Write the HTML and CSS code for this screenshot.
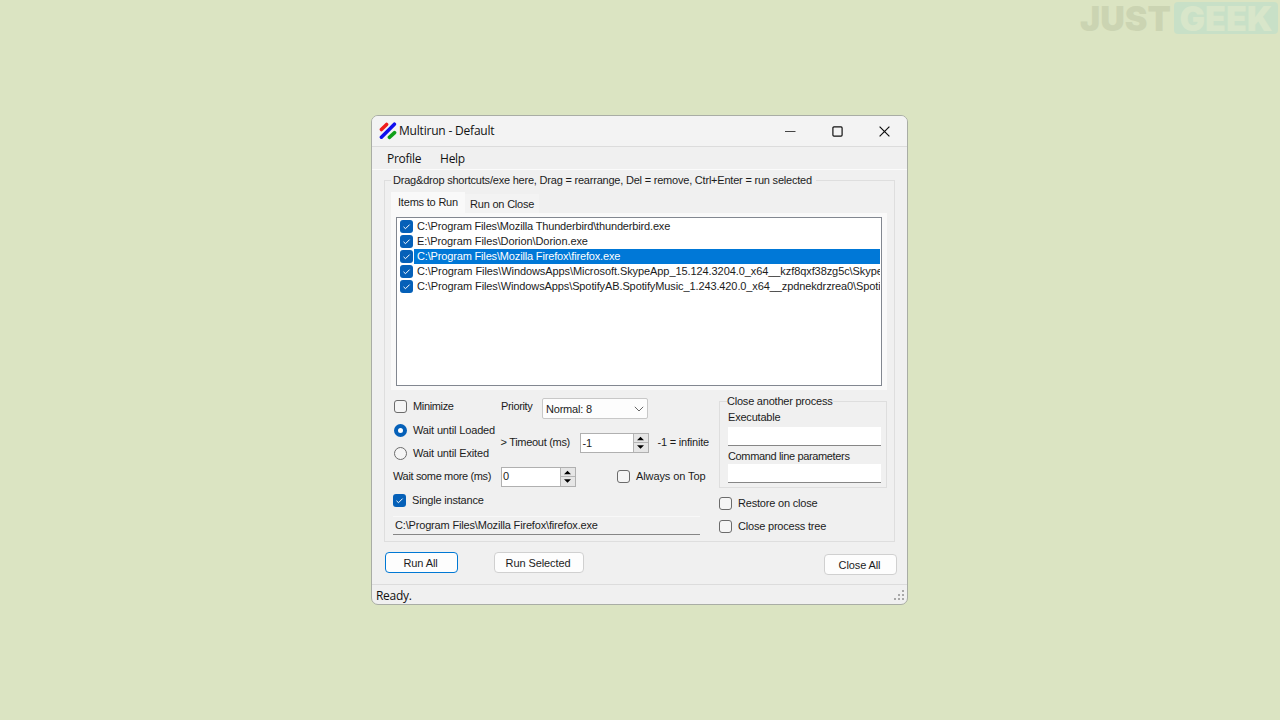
FILE: index.html
```html
<!DOCTYPE html>
<html lang="en">
<head>
    <meta charset="UTF-8">
    <meta name="viewport" content="width=device-width, initial-scale=1.0">
    <title>Multirun - Default</title>
    <link rel="stylesheet" href="styles.css">
</head>
<body>
    <div class="brand"><span class="brand-just">JUST</span><span class="brand-geek">GEEK</span></div>

    <div class="window">
        <div class="titlebar">
            <svg class="app-icon" width="18" height="18" viewBox="0 0 18 18" fill="none" stroke-linecap="round" stroke-width="3.5">
                <path d="M2.4 7.6L7.6 2.4" stroke="#f01c1c"/>
                <path d="M2.4 15.2L15.4 2.2" stroke="#1010ee"/>
                <path d="M10.4 15.4L15.6 10.6" stroke="#10a018"/>
            </svg>
            <span class="title">Multirun - Default</span>
            <div class="controls">
                <svg width="11" height="11" viewBox="0 0 11 11" fill="none" stroke="#444"><path d="M0 5.5H10.5"/></svg>
                <svg width="11" height="11" viewBox="0 0 11 11" fill="none" stroke="#111" stroke-width="1.2"><rect x="0.9" y="0.9" width="9.2" height="9.2" rx="1"/></svg>
                <svg width="11" height="11" viewBox="0 0 11 11" fill="none" stroke="#111" stroke-width="1.2"><path d="M0.6 0.6L10.4 10.4M10.4 0.6L0.6 10.4"/></svg>
            </div>
        </div>

        <div class="menubar">
            <span>Profile</span>
            <span>Help</span>
        </div>

        <fieldset class="group main-group">
            <legend>Drag&amp;drop shortcuts/exe here, Drag = rearrange, Del = remove, Ctrl+Enter = run selected</legend>

            <div class="tabs">
                <div class="tab active">Items to Run</div>
                <div class="tab">Run on Close</div>
            </div>
            <div class="tab-page">
                <div class="list">
                    <div class="item"><span class="check on"><svg viewBox="0 0 13 13"><path d="M3.5 6.8L5.5 8.7L9.6 4.6"/></svg></span><span class="path">C:\Program Files\Mozilla Thunderbird\thunderbird.exe</span></div>
                    <div class="item"><span class="check on"><svg viewBox="0 0 13 13"><path d="M3.5 6.8L5.5 8.7L9.6 4.6"/></svg></span><span class="path long">E:\Program Files\Dorion\Dorion.exe</span></div>
                    <div class="item selected"><span class="check on"><svg viewBox="0 0 13 13"><path d="M3.5 6.8L5.5 8.7L9.6 4.6"/></svg></span><span class="path">C:\Program Files\Mozilla Firefox\firefox.exe</span></div>
                    <div class="item"><span class="check on"><svg viewBox="0 0 13 13"><path d="M3.5 6.8L5.5 8.7L9.6 4.6"/></svg></span><span class="path long">C:\Program Files\WindowsApps\Microsoft.SkypeApp_15.124.3204.0_x64__kzf8qxf38zg5c\Skype</span></div>
                    <div class="item"><span class="check on"><svg viewBox="0 0 13 13"><path d="M3.5 6.8L5.5 8.7L9.6 4.6"/></svg></span><span class="path longer">C:\Program Files\WindowsApps\SpotifyAB.SpotifyMusic_1.243.420.0_x64__zpdnekdrzrea0\Spotif</span></div>
                </div>
            </div>

            <div class="options">
                <div class="left">
                    <div class="row row-priority">
                        <div class="cell"><span class="check"></span><span class="tight">Minimize</span></div>
                        <span class="priority-label tight">Priority</span>
                        <div class="select"><span>Normal: 8</span><svg width="10" height="6" viewBox="0 0 10 6" fill="none" stroke="#666"><path d="M0.8 0.8L5 5L9.2 0.8"/></svg></div>
                    </div>
                    <div class="row row-wait">
                        <div class="radios">
                            <div class="radio-row"><span class="radio on"></span><span>Wait until Loaded</span></div>
                            <div class="radio-row"><span class="radio"></span><span>Wait until Exited</span></div>
                        </div>
                        <span class="timeout-label">&gt; Timeout (ms)</span>
                        <div class="spinner spinner-timeout"><span>-1</span><svg width="15" height="18" viewBox="0 0 15 18"><path d="M0 0H15V18H0Z" fill="#e6e6e6"/><path d="M0.5 0V18M0 8.5H15" stroke="#b5b5b5"/><path d="M7.5 2.8L11 6.3H4Z M7.5 14.8L11 11.3H4Z" fill="#000"/></svg></div>
                        <span class="infinite">-1 = infinite</span>
                    </div>
                    <div class="row row-more">
                        <span class="more-label tight">Wait some more (ms)</span>
                        <div class="spinner spinner-more"><span>0</span><svg width="15" height="18" viewBox="0 0 15 18"><path d="M0 0H15V18H0Z" fill="#e6e6e6"/><path d="M0.5 0V18M0 8.5H15" stroke="#b5b5b5"/><path d="M7.5 2.8L11 6.3H4Z M7.5 14.8L11 11.3H4Z" fill="#000"/></svg></div>
                        <span class="check"></span><span class="on-top">Always on Top</span>
                    </div>
                    <div class="row row-single">
                        <span class="check on"><svg viewBox="0 0 13 13"><path d="M3.5 6.8L5.5 8.7L9.6 4.6"/></svg></span><span>Single instance</span>
                    </div>
                    <div class="path-field">C:\Program Files\Mozilla Firefox\firefox.exe</div>
                </div>

                <div class="right">
                    <fieldset class="group close-group">
                        <legend>Close another process</legend>
                        <div class="field-label">Executable</div>
                        <div class="field"></div>
                        <div class="field-label tight">Command line parameters</div>
                        <div class="field"></div>
                    </fieldset>
                    <div class="row right-row"><span class="check"></span><span>Restore on close</span></div>
                    <div class="row right-row"><span class="check"></span><span>Close process tree</span></div>
                </div>
            </div>
        </fieldset>

        <div class="buttons">
            <div class="button default">Run All</div>
            <div class="button run-selected">Run Selected</div>
            <div class="button close-all">Close All</div>
        </div>

        <div class="statusbar">
            <span>Ready.</span>
            <svg width="11" height="11" viewBox="0 0 11 11" fill="#a8a8a8"><path d="M8 0h2v2h-2zM4 4h2v2h-2zM8 4h2v2h-2zM0 8h2v2h-2zM4 8h2v2h-2zM8 8h2v2h-2z"/></svg>
        </div>
    </div>
</body>
</html>
```
FILE: styles.css
```css
* {
    margin: 0;
    padding: 0;
    box-sizing: border-box;
}

body {
    width: 1280px;
    height: 720px;
    overflow: hidden;
    background: #dbe4c2;
    font-family: "Liberation Sans", Arial, sans-serif;
    font-size: 11px;
    line-height: 13px;
    letter-spacing: -0.2px;
    color: #1c1c1c;
    white-space: nowrap;
    padding: 115px 0 0 371px;
}

.tight {
    letter-spacing: -0.35px;
}

.brand {
    position: absolute;
    top: 2px;
    right: 2px;
    display: flex;
    font-family: Inter, sans-serif;
    font-weight: 900;
    font-size: 34px;
    line-height: 33px;
    letter-spacing: 0;
}

.brand-just {
    color: #cbd4b2;
    width: 94px;
}

.brand-geek {
    background: #c8e0c7;
    color: #d8e6ca;
    border-radius: 4px;
    width: 104px;
    height: 32px;
    text-align: center;
}

.window {
    width: 537px;
    height: 490px;
    background: #f0f0f0;
    border: 1px solid #a9ada5;
    border-radius: 7px;
    overflow: hidden;
    display: flex;
    flex-direction: column;
}

.titlebar {
    height: 31px;
    flex: none;
    background: #f3f3f3;
    border-bottom: 1px solid #dcdcdc;
    display: flex;
    align-items: center;
    padding: 0 17px 0 7px;
    font-family: "Open Sans", sans-serif;
    font-size: 12px;
}

.title {
    margin-bottom: 1px;
    color: #111;
}

.app-icon {
    margin: 0 2px 1px 0;
}

.controls {
    margin-left: auto;
    display: flex;
    gap: 36px;
}

.menubar {
    height: 23px;
    flex: none;
    border-bottom: 1px solid #fbfbfb;
    display: flex;
    align-items: center;
    gap: 19px;
    padding-left: 15px;
    font-family: "Open Sans", sans-serif;
    font-size: 12px;
    letter-spacing: -0.3px;
    color: #111;
}

.group {
    border: 1px solid #dedede;
}

.main-group {
    width: 511px;
    height: 368px;
    flex: none;
    margin: 4px 0 0 12px;
    padding: 0 7px 0 6px;
}

.main-group > legend {
    padding: 0 4px 0 2px;
    letter-spacing: -0.21px;
}

.tabs {
    display: flex;
    align-items: flex-end;
    height: 26px;
    padding-top: 5px;
}

.tab {
    height: 19px;
    line-height: 20px;
    padding: 0 5px;
    background: #f3f3f3;
}

.tab.active {
    height: 21px;
    width: 74px;
    padding: 0 0 0 7px;
    background: #f9f9f9;
}

.tab-page {
    background: #f9f9f9;
    padding: 4px 5px;
    height: 177px;
}

.list {
    height: 169px;
    width: 486px;
    border: 1px solid #828790;
    background: #fff;
    overflow: hidden;
    padding: 1px 1px 0 3px;
}

.item {
    display: flex;
    align-items: center;
    height: 15px;
    overflow: hidden;
}

.item .path {
    margin-left: 1px;
    padding-left: 3px;
    flex: 1;
    line-height: 15px;
    letter-spacing: -0.16px;
    overflow: hidden;
}

.item .path.long {
    letter-spacing: -0.08px;
}

.item .path.longer {
    letter-spacing: -0.11px;
}

.selected .path {
    background: #0078d7;
    color: #fff;
}

.check {
    width: 13px;
    height: 13px;
    flex: none;
    display: block;
    border: 1px solid #6b6b6b;
    border-radius: 3px;
    background: #f5f5f5;
}

.check.on {
    background: #0560b8;
    border: none;
}

.check svg {
    display: block;
    fill: none;
    stroke: #fff;
}

.options {
    display: flex;
    justify-content: space-between;
    margin-top: 5px;
}

.left {
    width: 318px;
    padding: 3px 0 0 2px;
}

.row {
    display: flex;
    align-items: center;
}

.row-priority {
    height: 21px;
}

.cell {
    display: flex;
    width: 108px;
    gap: 6px;
    padding-left: 1px;
    margin-bottom: 5px;
}

.priority-label {
    width: 41px;
    margin-bottom: 4px;
}

.select {
    width: 106px;
    height: 21px;
    border: 1px solid #c8c8c8;
    border-radius: 2px;
    background: #fdfdfd;
    display: flex;
    align-items: center;
    justify-content: space-between;
    padding: 1px 3px 0 3px;
}

.row-wait {
    height: 46px;
}

.radios {
    width: 108px;
    padding-left: 1px;
}

.radio-row {
    display: flex;
    align-items: center;
    gap: 6px;
    height: 23px;
    letter-spacing: -0.15px;
}

.radio {
    width: 13px;
    height: 13px;
    border: 1px solid #6b6b6b;
    border-radius: 50%;
    background: #f5f5f5;
}

.radio.on {
    border: 4px solid #0560b8;
    background: #fff;
}

.timeout-label {
    width: 79px;
    flex: none;
    letter-spacing: -0.3px;
}

.spinner {
    height: 20px;
    flex: none;
    border: 1px solid #b0b0b0;
    background: #fff;
    display: flex;
    align-items: center;
    justify-content: space-between;
    padding-left: 1px;
}

.spinner-timeout {
    width: 69px;
    margin: 2px 0 0 1px;
}

.infinite {
    margin-left: 8px;
}

.row-more {
    height: 23px;
}

.more-label {
    width: 108px;
}

.row-more .spinner {
    width: 75px;
    margin-right: 41px;
}

.row-more .check {
    margin-right: 6px;
}

.on-top {
    letter-spacing: -0.1px;
}

.row-single {
    height: 23px;
    gap: 6px;
    padding-top: 1px;
}

.path-field {
    width: 307px;
    height: 19px;
    margin-top: 5px;
    padding: 2px;
    border-top: 1px solid #f8f8f8;
    border-bottom: 1px solid #868686;
    letter-spacing: -0.17px;
}

.right {
    width: 168px;
}

.close-group {
    height: 93px;
    padding: 3px 5px 0 7px;
}

.close-group legend {
    padding: 0 1px 0 0;
    letter-spacing: -0.22px;
}

.field-label {
    padding-left: 1px;
}

.field {
    height: 19px;
    width: 153px;
    background: #fff;
    border-bottom: 1px solid #868686;
    margin: 3px 0 4px 1px;
}

.field-label.tight + .field {
    margin-top: 1px;
}

.right-row {
    height: 23px;
    gap: 6px;
}

.close-group + .right-row {
    margin-top: 4px;
}

.buttons {
    display: flex;
    padding: 10px 10px 0 13px;
    height: 42px;
    flex: none;
}

.button {
    height: 21px;
    width: 73px;
    background: #fdfdfd;
    border: 1px solid #d0d0d0;
    border-radius: 4px;
    text-align: center;
    line-height: 20px;
    letter-spacing: -0.1px;
    padding-right: 2px;
}

.button.default {
    border-color: #0078d4;
}

.button.run-selected {
    width: 90px;
    margin-left: 36px;
}

.button.close-all {
    margin: 2px 0 0 auto;
}

.statusbar {
    flex: 1;
    border-top: 1px solid #dcdcdc;
    display: flex;
    align-items: center;
    justify-content: space-between;
    padding: 2px 2px 0 4px;
    font-family: "Open Sans", sans-serif;
    font-size: 12px;
    letter-spacing: -0.3px;
    color: #111;
}
```
